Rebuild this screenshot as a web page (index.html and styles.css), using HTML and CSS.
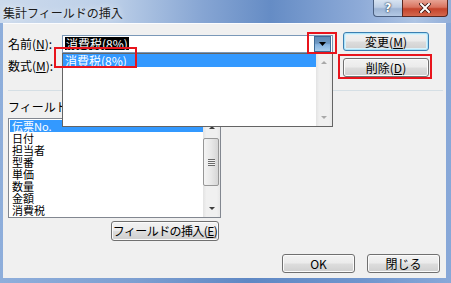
FILE: index.html
```html
<!DOCTYPE html>
<html lang="ja">
<head>
    <meta charset="UTF-8">
    <meta name="viewport" content="width=device-width, initial-scale=1.0">
    <title>集計フィールドの挿入</title>
    <link rel="stylesheet" href="styles.css">
</head>
<body>
    <div class="window">
        <!-- Title bar -->
        <div class="titlebar">
            <span class="title">集計フィールドの挿入</span>
            <div class="caption-buttons">
                <span class="cap-btn help">?</span>
                <span class="cap-btn close">
                    <svg width="12" height="10" viewBox="0 0 12 10">
                        <path d="M2 1 L10 9 M10 1 L2 9" stroke="#3a1410" stroke-width="3.6" stroke-linecap="square"/>
                        <path d="M2 1 L10 9 M10 1 L2 9" stroke="#ffffff" stroke-width="2" stroke-linecap="square"/>
                    </svg>
                </span>
            </div>
        </div>

        <div class="client">
            <div class="top">
                <div class="fields">
                    <div class="row">
                        <span class="label">名前(<u>N</u>):</span>
                        <div class="combo">
                            <span class="combo-text"><span class="selected-text">消費税(8%)</span></span>
                            <span class="combo-arrow">
                                <svg width="7" height="4" viewBox="0 0 7 4"><path d="M0 0 H7 L3.5 4 Z" fill="#000"/></svg>
                            </span>
                        </div>
                    </div>
                    <div class="row row-formula">
                        <span class="label">数式(<u>M</u>):</span>
                        <div class="textbox"></div>
                    </div>
                </div>
                <div class="side">
                    <button class="btn btn-side btn-default">変更(<u>M</u>)</button>
                    <button class="btn btn-side">削除(<u>D</u>)</button>
                </div>
            </div>

            <div class="separator"></div>

            <div class="list-label">フィールド(<u>F</u>):</div>
            <div class="listbox">
                <ul class="items">
                    <li class="active">伝票No.</li>
                    <li>日付</li>
                    <li>担当者</li>
                    <li>型番</li>
                    <li>単価</li>
                    <li>数量</li>
                    <li>金額</li>
                    <li>消費税</li>
                </ul>
                <div class="vscroll">
                    <div class="sb-btn"><span class="arrow-up"></span></div>
                    <div class="sb-track">
                        <div class="sb-thumb"><span class="grip"></span></div>
                    </div>
                    <div class="sb-btn"><span class="arrow-down"></span></div>
                </div>
            </div>

            <div class="insert-row">
                <button class="btn btn-insert">フィールドの挿入(<u>E</u>)</button>
            </div>

            <div class="footer">
                <button class="btn btn-footer">OK</button>
                <button class="btn btn-footer">閉じる</button>
            </div>
        </div>

        <!-- Opened drop-down list of the name combo -->
        <div class="dropdown">
            <ul class="dropdown-items">
                <li class="active">消費税(8%)</li>
            </ul>
            <div class="vscroll vscroll-disabled">
                <div class="sb-btn"><span class="arrow-up"></span></div>
                <div class="sb-track"></div>
                <div class="sb-btn"><span class="arrow-down"></span></div>
            </div>
        </div>

        <!-- Red annotation frames -->
        <div class="mark mark-arrow"></div>
        <div class="mark mark-item"></div>
        <div class="mark mark-delete"></div>
    </div>
</body>
</html>
```

FILE: styles.css
```css
/* Page */
body {
    margin: 0;
    font-family: "Noto Sans CJK JP", "Noto Sans", sans-serif;
    font-size: 12px;
    color: #000;
}

u {
    text-decoration: underline;
    text-underline-offset: 1px;
}

/* Aero window frame */
.window {
    position: relative;
    width: 451px;
    height: 283px;
    box-sizing: border-box;
    padding: 0 5px 5px 3px;
    background: linear-gradient(90deg, #8eaedb 0%, #7d9fd1 30%, #5f88c4 55%, #6f95cd 80%, #88a8d8 100%);
    overflow: hidden;
}

.titlebar {
    height: 23px;
    margin: 0 -5px 0 -3px;
    padding-left: 3px;
    display: flex;
    justify-content: space-between;
    align-items: flex-start;
    background: linear-gradient(90deg, #ccdaec 0%, #bccfe8 25%, #86a5d3 45%, #658cc5 60%, #8eabd8 80%, #aec4e3 92%, #93afd9 100%);
}

.title {
    margin-top: 5px;
    line-height: 15px;
    color: #1b1b1b;
    text-shadow: 0 0 6px rgba(255, 255, 255, 0.9);
}

.caption-buttons {
    display: flex;
    margin-right: 3px;
}

.cap-btn {
    height: 17px;
    box-sizing: border-box;
    display: flex;
    align-items: center;
    justify-content: center;
    border: 1px solid #4a5f80;
    border-top: none;
}

.help {
    width: 29px;
    border-radius: 0 0 0 4px;
    border-right: none;
    background: linear-gradient(#d7e3f1 0%, #bccde4 45%, #9db4d4 55%, #b4c9e4 100%);
    color: #fff;
    font-family: "DejaVu Sans", sans-serif;
    font-weight: bold;
    font-size: 12px;
    text-shadow: 0 0 2px #1d2c44, 0 0 1px #1d2c44;
}

.close {
    width: 46px;
    border-color: #5a2720;
    border-radius: 0 0 4px 0;
    background: linear-gradient(#e7a394 0%, #d9735f 45%, #c4432b 55%, #d4684e 100%);
}

/* Client area */
.client {
    height: 255px;
    box-sizing: border-box;
    background: #f0f0f0;
    border-top: 1px solid #fbfcfe;
    padding-top: 8px;
}

.top {
    display: flex;
}

.fields {
    margin-left: 5px;
    margin-top: 3px;
}

.row {
    display: flex;
    align-items: center;
    height: 18px;
}

.row-formula {
    margin-top: 4px;
}

.label {
    width: 54px;
    line-height: 14px;
}

.combo,
.textbox {
    width: 271px;
    height: 18px;
    box-sizing: border-box;
    border: 1px solid #abadb3;
    background: #fff;
}

.combo {
    display: flex;
    justify-content: space-between;
    border-color: #7a98b8;
}

.combo-text {
    padding: 1px 0 0 2px;
    line-height: 13px;
}

.selected-text {
    display: inline-block;
    background: #000;
    color: #fff;
    padding: 0 1px;
}

.combo-arrow {
    width: 15px;
    display: flex;
    align-items: center;
    justify-content: center;
    border: 1px solid #3c6a96;
    margin: 0 1px 0 0;
    background: linear-gradient(#5f8ab6 0%, #6e98c3 45%, #86b3e0 55%, #a9cdec 100%);
}

.side {
    margin-left: 10px;
    display: flex;
    flex-direction: column;
    gap: 7px;
}

/* Win7 push buttons */
.btn {
    font-family: inherit;
    font-size: 12px;
    line-height: 14px;
    color: #000;
    padding: 0;
    white-space: nowrap;
    box-sizing: border-box;
    border: 1px solid #707070;
    border-radius: 3px;
    background: linear-gradient(#f2f2f2 0%, #ebebeb 48%, #dddddd 52%, #cfcfcf 100%);
    box-shadow: inset 0 0 0 1px #fbfbfb;
}

.btn-side {
    width: 86px;
    height: 19px;
}

.btn-default {
    border-color: #3c7fb1;
    box-shadow: inset 0 0 0 1px #aee3f8, inset 0 0 0 2px #d8f1fb;
}

.separator {
    margin: 13px 3px 0 5px;
    border-top: 1px solid #d5dfe5;
}

.list-label {
    margin: 9px 0 0 5px;
    line-height: 14px;
}

/* Fields list box */
.listbox {
    margin: 4px 0 0 5px;
    width: 213px;
    height: 100px;
    box-sizing: border-box;
    border: 1px solid #828790;
    background: #fff;
    display: flex;
}

.items {
    flex: 1;
    list-style: none;
    margin: 0;
    padding: 1px 0 0 1px;
    font-size: 11px;
}

.items li {
    height: 12px;
    line-height: 12px;
    padding-left: 2px;
}

.items li.active {
    background: #3399ff;
    color: #fff;
}

/* Scroll bars */
.vscroll {
    width: 17px;
    display: flex;
    flex-direction: column;
    background: linear-gradient(90deg, #e3e3e3 0%, #f0f0f0 20%, #f0f0f0 80%, #e8e8e8 100%);
}

.sb-btn {
    height: 17px;
    display: flex;
    align-items: center;
    justify-content: center;
}

.sb-track {
    flex: 1;
}

.sb-thumb {
    margin: 2px 1px 0 0;
    height: 48px;
    box-sizing: border-box;
    border: 1px solid #979797;
    border-radius: 2px;
    background: linear-gradient(90deg, #f4f4f4 0%, #e8e8e8 50%, #d6d6d6 100%);
    display: flex;
    align-items: center;
    justify-content: center;
}

.grip {
    width: 7px;
    height: 7px;
    background: repeating-linear-gradient(#6a6a6a 0, #6a6a6a 1px, #f2f2f2 1px, #f2f2f2 2px);
}

.arrow-up,
.arrow-down {
    width: 0;
    height: 0;
    border-left: 3px solid transparent;
    border-right: 3px solid transparent;
}

.arrow-up {
    border-bottom: 3px solid #3d3d3d;
}

.arrow-down {
    border-top: 3px solid #3d3d3d;
}

.vscroll-disabled .arrow-up {
    border-bottom-color: #a9a9a9;
}

.vscroll-disabled .arrow-down {
    border-top-color: #a9a9a9;
}

.insert-row {
    margin: 3px 0 0 108px;
}

.btn-insert {
    width: 108px;
    height: 20px;
    letter-spacing: -0.6px;
}

.footer {
    margin: 13px 6px 0 0;
    display: flex;
    justify-content: flex-end;
    gap: 12px;
}

.btn-footer {
    width: 73px;
    height: 19px;
}

/* Drop-down list over the dialog */
.dropdown {
    position: absolute;
    left: 62px;
    top: 53px;
    width: 271px;
    height: 74px;
    box-sizing: border-box;
    border: 1px solid #646464;
    background: #fff;
    display: flex;
}

.dropdown-items {
    flex: 1;
    list-style: none;
    margin: 0;
    padding: 0;
}

.dropdown-items li {
    height: 13px;
    line-height: 13px;
    padding-left: 2px;
}

.dropdown-items li.active {
    background: #3399ff;
    color: #fff;
}

.dropdown .vscroll {
    width: 16px;
}

/* Annotation frames */
.mark {
    position: absolute;
    box-sizing: border-box;
    border: 2px solid #e8141c;
}

.mark-arrow {
    left: 307px;
    top: 32px;
    width: 30px;
    height: 22px;
}

.mark-item {
    left: 54px;
    top: 47px;
    width: 83px;
    height: 21px;
}

.mark-delete {
    left: 338px;
    top: 54px;
    width: 94px;
    height: 25px;
}
```
